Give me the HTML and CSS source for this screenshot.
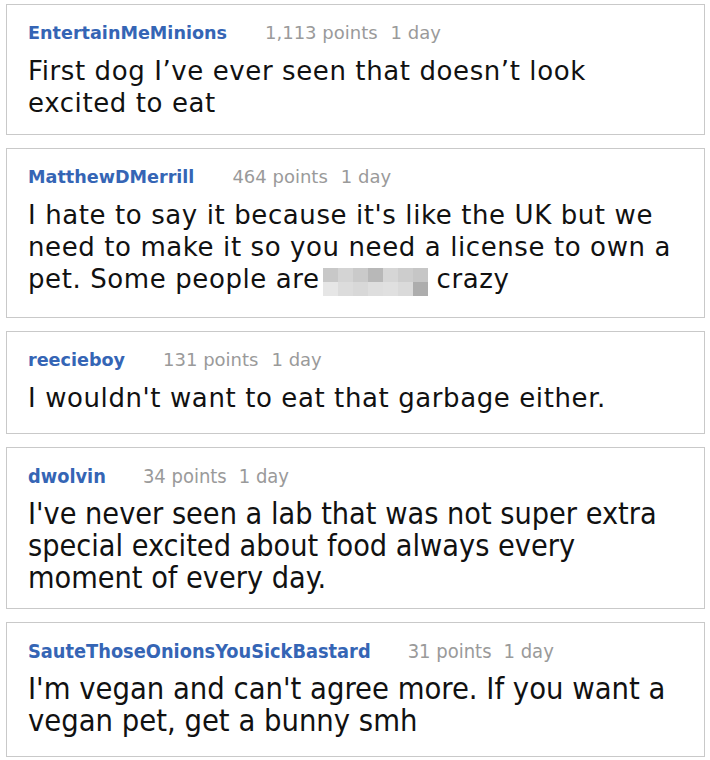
FILE: index.html
```html
<!DOCTYPE html>
<html>
<head>
<meta charset="utf-8">
<link rel="stylesheet" href="styles.css">
</head>
<body>
<div class="list">
  <div class="card c1">
    <div class="meta"><span class="user">EntertainMeMinions</span><span class="pts">1,113 points</span><span class="age">1 day</span></div>
    <p class="text">First dog I’ve ever seen that doesn’t look<br>excited to eat</p>
  </div>
  <div class="card c2">
    <div class="meta"><span class="user">MatthewDMerrill</span><span class="pts">464 points</span><span class="age">1 day</span></div>
    <p class="text">I hate to say it because it's like the UK but we<br>need to make it so you need a license to own a<br>pet. Some people are<span class="blur"><i class="a"></i><i class="b"></i><i class="c"></i><i class="d"></i><i class="e"></i><i class="f"></i><i class="g"></i><i class="h"></i><i class="j"></i><i class="k"></i><i class="l"></i><i class="m"></i><i class="n"></i><i class="o"></i></span> crazy</p>
  </div>
  <div class="card c3">
    <div class="meta"><span class="user">reecieboy</span><span class="pts">131 points</span><span class="age">1 day</span></div>
    <p class="text">I wouldn't want to eat that garbage either.</p>
  </div>
  <div class="card c4 narrow">
    <div class="meta"><span class="user">dwolvin</span><span class="pts">34 points</span><span class="age">1 day</span></div>
    <p class="text">I've never seen a lab that was not super extra<br>special excited about food always every<br>moment of every day.</p>
  </div>
  <div class="card c5 narrow">
    <div class="meta"><span class="user">SauteThoseOnionsYouSickBastard</span><span class="pts">31 points</span><span class="age">1 day</span></div>
    <p class="text">I'm vegan and can't agree more. If you want a<br>vegan pet, get a bunny smh</p>
  </div>
</div>
</body>
</html>
```

FILE: styles.css
```css
html, body {
  margin: 0;
  padding: 0;
  background: #ffffff;
}
body {
  font-family: "DejaVu Sans", Verdana, sans-serif;
  color: #111111;
}
.list {
  display: flex;
  flex-direction: column;
  gap: 13px;
  padding: 4px 5px 0 6px;
}
.card {
  border: 1px solid #c9c9c9;
  background: #fff;
  padding: 17px 10px 0 21px;
  box-sizing: border-box;
  overflow: hidden;
}
.c1 { height: 131px; }
.c2 { height: 170px; }
.c3 { height: 103px; }
.c4 { height: 162px; }
.c5 { height: 135px; }
.meta {
  display: flex;
  align-items: baseline;
  font-size: 18px;
  line-height: 22px;
  white-space: nowrap;
}
.user {
  font-weight: bold;
  font-size: 17.6px;
  color: #3565b5;
  margin-right: 38px;
}
.pts {
  color: #9a9a9a;
  margin-right: 13px;
}
.age {
  color: #9a9a9a;
}
.text {
  margin: 11px 0 0;
  font-size: 26px;
  letter-spacing: 0.6px;
  line-height: 32px;
  white-space: nowrap;
}
.narrow .meta, .narrow .text {
  font-family: "DejaVu Sans Condensed", "DejaVu Sans", sans-serif;
  font-stretch: condensed;
}
.narrow .meta { font-size: 20px; }
.narrow .user { font-size: 19.8px; margin-right: 37px; }
.narrow .pts { margin-right: 12px; }
.narrow .text {
  font-size: 30.3px;
  letter-spacing: 0;
  margin-top: 10px;
}
.c5 .text { font-size: 30.6px; }
.blur {
  display: inline-grid;
  grid-template-columns: repeat(7, 15px);
  grid-template-rows: 14px 14px;
  vertical-align: 6px;
  margin-left: 3px;
}
.blur i { display: block; }
.blur .a { background: #c8c8c8; }
.blur .b { background: #d4d4d4; }
.blur .c { background: #cacaca; }
.blur .d { background: #b8b8b8; }
.blur .e { background: #d6d6d6; }
.blur .f { background: #cdcdcd; }
.blur .g { background: #c6c6c6; }
.blur .h { background: #e6e6e6; }
.blur .j { background: #dcdcdc; }
.blur .k { background: #d8d8d8; }
.blur .l { background: #dedede; }
.blur .m { background: #e0e0e0; }
.blur .n { background: #dadada; }
.blur .o { background: #adadad; }
```
